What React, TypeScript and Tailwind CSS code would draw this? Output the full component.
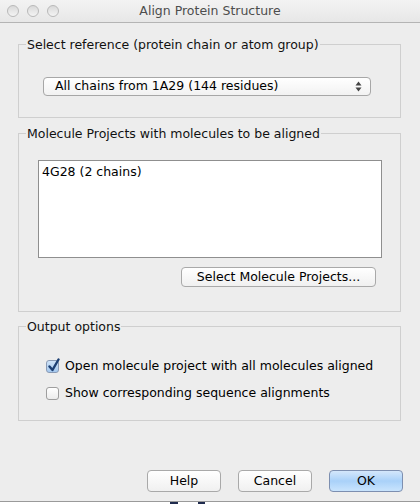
import React from "react";

const font = { fontFamily: '"DejaVu Sans", "Liberation Sans", sans-serif' };

function Light() {
  return (
    <span className="w-[12px] h-[12px] rounded-full border border-[#b9b9b9] bg-gradient-to-b from-[#d9d9d9] to-[#f4f4f4]" />
  );
}

function Group({
  title,
  className,
  children,
}: {
  title: string;
  className?: string;
  children: React.ReactNode;
}) {
  return (
    <fieldset className="border border-[#cfcfcf]">
      <legend className="ml-[7px] px-[1px] text-[12.5px] leading-[15px] text-[#111]">{title}</legend>
      <div className={className}>{children}</div>
    </fieldset>
  );
}

function Button({ label, primary }: { label: string; primary?: boolean }) {
  return (
    <button
      className={
        "w-[74px] h-[22px] rounded-[4px] border text-[12.5px] text-black " +
        (primary
          ? "border-[#7d8fb0] bg-gradient-to-b from-[#d4e7fb] via-[#a9d1f9] to-[#c9e4fd]"
          : "border-[#a9a9a9] bg-gradient-to-b from-white to-[#f0f0f0]")
      }
    >
      {label}
    </button>
  );
}

function Check({ checked, label }: { checked?: boolean; label: string }) {
  return (
    <div className="flex items-center h-[13px] pl-[27px]">
      <span
        className={
          "relative w-[13px] h-[13px] rounded-[3px] border shrink-0 " +
          (checked
            ? "border-[#8a9bb5] bg-gradient-to-b from-[#cfe3f8] to-[#a4c8ee]"
            : "border-[#9e9e9e] bg-gradient-to-b from-white to-[#ececec]")
        }
      >
        {checked && (
          <svg className="absolute -top-[3px] left-[1px]" width="12" height="15" viewBox="0 0 12 15">
            <path d="M1.5 8.5 L4.5 12 L10.5 1.5" fill="none" stroke="#1c3f73" strokeWidth="2.4" strokeLinecap="round" strokeLinejoin="round" />
          </svg>
        )}
      </span>
      <span className="ml-[6px] text-[12.5px] text-black">{label}</span>
    </div>
  );
}

export default function App() {
  return (
    <div style={font} className="w-[420px] h-[504px] bg-[#ededed] flex flex-col overflow-hidden">
      <div className="relative h-[23px] shrink-0 border-b border-[#b4b4b4] bg-gradient-to-b from-[#f3f3f3] to-[#e7e7e7] flex items-center">
        <div className="flex gap-[8px] pl-[7px]">
          <Light />
          <Light />
          <Light />
        </div>
        <span className="absolute inset-0 flex items-center justify-center text-[12.5px] text-[#4d4d4d]">
          Align Protein Structure
        </span>
      </div>

      <div className="flex flex-col pl-[18px] pr-[19px] pt-[14px]">
        <Group title="Select reference (protein chain or atom group)" className="h-[65px] pt-[25px] pl-[24px] pr-[29px]">
          <div className="h-[19px] rounded-[4px] border border-[#a7a7a7] bg-gradient-to-b from-white to-[#f2f2f2] flex items-center pl-[11px] pr-[8px] text-[12.5px] text-black">
            <span className="flex-1">All chains from 1A29 (144 residues)</span>
            <svg width="7" height="11" viewBox="0 0 7 11">
              <path d="M0.5 4.5 L3.5 0.5 L6.5 4.5 Z" fill="#444" />
              <path d="M0.5 6.5 L3.5 10.5 L6.5 6.5 Z" fill="#444" />
            </svg>
          </div>
        </Group>

        <div className="mt-[8px]">
          <Group title="Molecule Projects with molecules to be aligned" className="h-[170px] pt-[19px] pl-[19px] pr-[18px]">
            <div className="h-[98px] border border-[#8f8f8f] bg-white pl-[3px] pt-[3px] text-[12.5px] text-black leading-[15px]">
              4G28 (2 chains)
            </div>
            <div className="flex justify-end mt-[9px] pr-[6px]">
              <button className="w-[195px] h-[20px] rounded-[4px] border border-[#a9a9a9] bg-gradient-to-b from-white to-[#f0f0f0] text-[12.5px] text-black">
                Select Molecule Projects...
              </button>
            </div>
          </Group>
        </div>

        <div className="mt-[7px]">
          <Group title="Output options" className="h-[86px] pt-[26px] flex flex-col gap-[14px]">
            <Check checked label="Open molecule project with all molecules aligned" />
            <Check label="Show corresponding sequence alignments" />
          </Group>
        </div>
      </div>

      <div className="flex justify-end gap-[17px] pr-[17px] mt-auto mb-[9px]">
        <Button label="Help" />
        <Button label="Cancel" />
        <Button label="OK" primary />
      </div>
      <div className="h-[3px] shrink-0 border-t border-[#9a9a9a] bg-white relative">
        <span className="absolute left-[170px] top-0 w-[8px] h-[2px] bg-[#1f2b4e]" />
        <span className="absolute left-[198px] top-0 w-[7px] h-[2px] bg-[#1f2b4e]" />
      </div>
    </div>
  );
}
